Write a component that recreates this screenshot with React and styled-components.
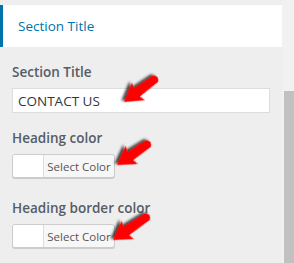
import styled, { createGlobalStyle } from 'styled-components';

const Global = createGlobalStyle`
  body {
    margin: 0;
    background: #eeeeee;
    font-family: "Open Sans", "Noto Sans", sans-serif;
  }
`;

const arrows = [
  { x: 158, y: 77, tx: 124, ty: 102 },
  { x: 151, y: 142, tx: 117, ty: 165 },
  { x: 150, y: 215, tx: 113, ty: 240 },
];

const Arrow = ({ x, y, tx, ty }) => {
  const dx = tx - x;
  const dy = ty - y;
  const len = Math.sqrt(dx * dx + dy * dy);
  const ang = (Math.atan2(dy, dx) * 180) / Math.PI;
  const b = len - 16;
  return (
    <g transform={`translate(${x} ${y}) rotate(${ang})`} filter="url(#shadow)">
      <path
        d={`M ${len} 0 L ${b - 2} -11 L ${b} -5 L 3 -4 Q -2 0 3 4 L ${b} 5 L ${b - 2} 11 Z`}
        fill="#ff0000"
      />
    </g>
  );
};

const App = () => (
  <>
    <Global />
    <Page>
      <Panel>
        <Header>Section Title</Header>
        <Body>
          <Control>
            <Label>Section Title</Label>
            <TextInput defaultValue="CONTACT US" />
          </Control>
          <Control $top={15}>
            <Label>Heading color</Label>
            <ColorButton>
              <Swatch />
              <ButtonText>Select Color</ButtonText>
            </ColorButton>
          </Control>
          <Control $top={20}>
            <Label>Heading border color</Label>
            <ColorButton>
              <Swatch />
              <ButtonText>Select Color</ButtonText>
            </ColorButton>
          </Control>
        </Body>
      </Panel>
      <Scrollbar>
        <Thumb />
      </Scrollbar>
      <Overlay width="294" height="263">
        <defs>
          <filter id="shadow" x="-30%" y="-30%" width="160%" height="180%">
            <feDropShadow dx="1.5" dy="2.5" stdDeviation="1.2" floodColor="#000" floodOpacity="0.75" />
          </filter>
        </defs>
        {arrows.map((a, i) => (
          <Arrow key={i} {...a} />
        ))}
      </Overlay>
    </Page>
  </>
);

export default App;

const Page = styled.div`
  position: relative;
  display: flex;
  width: 294px;
  height: 263px;
  overflow: hidden;
`;

const Panel = styled.div`
  width: 282px;
  padding-top: 5px;
`;

const Header = styled.div`
  display: flex;
  align-items: center;
  height: 42px;
  padding-left: 15px;
  border-left: 3px solid #0073aa;
  background: #fff;
  color: #0073aa;
  font-size: 13.5px;
  font-weight: 500;
  box-sizing: border-box;
`;

const Body = styled.div`
  padding: 15px 12px 0;
`;

const Control = styled.div`
  margin-top: ${(p) => p.$top || 0}px;
`;

const Label = styled.div`
  color: #555d66;
  font-size: 13.5px;
  font-weight: 600;
  line-height: 20px;
  margin-bottom: 6px;
`;

const TextInput = styled.input`
  display: block;
  width: 258px;
  height: 25px;
  box-sizing: border-box;
  margin: 0;
  padding: 0 5px;
  border: 1px solid #dddddd;
  background: #fff;
  color: #32373c;
  font-family: "Open Sans", "Noto Sans", sans-serif;
  font-size: 13.5px;
  outline: none;
`;

const ColorButton = styled.div`
  display: flex;
  width: 103px;
  height: 24px;
  box-sizing: border-box;
  border: 1px solid #cccccc;
  border-radius: 3px;
  background: #f7f7f7;
  box-shadow: 0 1px 0 #cccccc;
  overflow: hidden;
`;

const Swatch = styled.div`
  width: 30px;
  background: #fff;
  border-right: 1px solid #dddddd;
`;

const ButtonText = styled.div`
  flex: 1;
  display: flex;
  align-items: center;
  justify-content: center;
  color: #555;
  font-size: 11.5px;
`;

const Scrollbar = styled.div`
  width: 12px;
  background: #f1f1f1;
  display: flex;
  flex-direction: column;
  align-items: flex-end;
`;

const Thumb = styled.div`
  margin-top: 91px;
  width: 10px;
  flex: 1;
  background: #c1c1c1;
`;

const Overlay = styled.svg`
  position: absolute;
  left: 0;
  top: 0;
  pointer-events: none;
`;
